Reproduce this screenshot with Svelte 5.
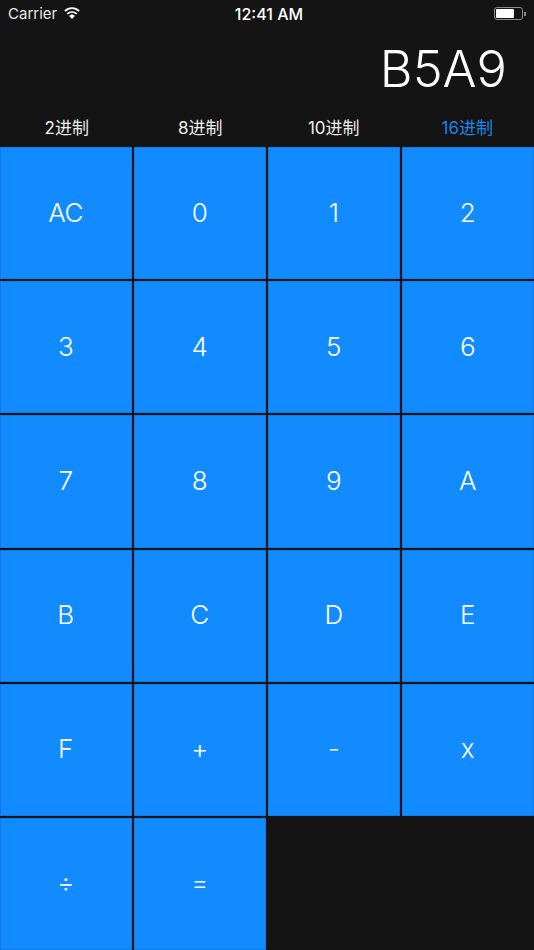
<script>
  const tabs = ["2进制", "8进制", "10进制", "16进制"];
  let active = 3;
  const keys = ["AC","0","1","2","3","4","5","6","7","8","9","A","B","C","D","E","F","+","-","x","÷","="];
  let display = "B5A9";
</script>

<div class="app">
  <div class="status">
    <div class="left">
      <span class="carrier">Carrier</span>
      <svg class="wifi" width="16" height="12" viewBox="0 0 16 12">
        <path d="M8 12 5.2 8.9a4 4 0 0 1 5.6 0z" fill="#fff"/>
        <path d="M3.3 6.9a6.8 6.8 0 0 1 9.4 0" fill="none" stroke="#fff" stroke-width="1.7"/>
        <path d="M.9 4.1a10.2 10.2 0 0 1 14.2 0" fill="none" stroke="#fff" stroke-width="1.7"/>
      </svg>
    </div>
    <span class="time">12:41 AM</span>
    <div class="battery">
      <div class="shell"><div class="level"></div></div>
      <div class="nub"></div>
    </div>
  </div>
  <div class="display">{display}</div>
  <div class="tabs">
    {#each tabs as t, i}
      <button class="tab" class:active={i === active} onclick={() => (active = i)}>{t}</button>
    {/each}
  </div>
  <div class="keys">
    {#each keys as k}
      <button class="key">{k}</button>
    {/each}
  </div>
</div>

<style>
  :global(body) {
    margin: 0;
    background: #141414;
  }

  .app {
    width: 534px;
    height: 950px;
    background: #141414;
    color: #fff;
    font-family: Inter, "Noto Sans CJK SC", sans-serif;
    display: flex;
    flex-direction: column;
    overflow: hidden;
  }

  .status {
    height: 28px;
    display: flex;
    align-items: center;
    justify-content: space-between;
    padding: 0 8px 1px 8px;
    box-sizing: border-box;
    font-size: 15px;
  }

  .left {
    width: 110px;
    display: flex;
    align-items: center;
    gap: 7px;
  }

  .carrier {
    color: #e8e8e8;
  }

  .wifi {
    margin-top: -2px;
  }

  .time {
    font-size: 16px;
    font-weight: 450;
    margin-left: 4px;
  }

  .battery {
    width: 110px;
    display: flex;
    justify-content: flex-end;
    align-items: center;
  }

  .shell {
    width: 29px;
    height: 13px;
    box-sizing: border-box;
    border: 1px solid #8a8a8a;
    border-radius: 3px;
    padding: 1px;
  }

  .level {
    width: 18px;
    height: 100%;
    background: #fff;
    border-radius: 1px;
  }

  .nub {
    width: 2px;
    height: 4px;
    background: #8a8a8a;
    margin-left: 1px;
  }

  .display {
    height: 80px;
    display: flex;
    align-items: center;
    justify-content: flex-end;
    padding-right: 27px;
    font-size: 50.5px;
    font-weight: 300;
  }

  .tabs {
    height: 39px;
    display: grid;
    grid-template-columns: repeat(4, 1fr);
    padding-bottom: 2px;
    box-sizing: border-box;
  }

  .tab {
    background: none;
    border: 0;
    padding: 0;
    font: inherit;
    font-size: 17px;
    color: #eee;
  }

  .tab.active {
    color: #1a86e8;
  }

  .keys {
    flex: 1;
    display: grid;
    grid-template-columns: repeat(4, 132px);
    grid-template-rows: repeat(6, 1fr);
    gap: 2px;
  }

  .key {
    background: #118bff;
    box-shadow: inset 0 0 0 1px #0f7ce4;
    border: 0;
    padding: 0 1px 2px 0;
    color: #fff;
    font: inherit;
    font-size: 26px;
    font-weight: 350;
    letter-spacing: -0.02em;
  }
</style>
